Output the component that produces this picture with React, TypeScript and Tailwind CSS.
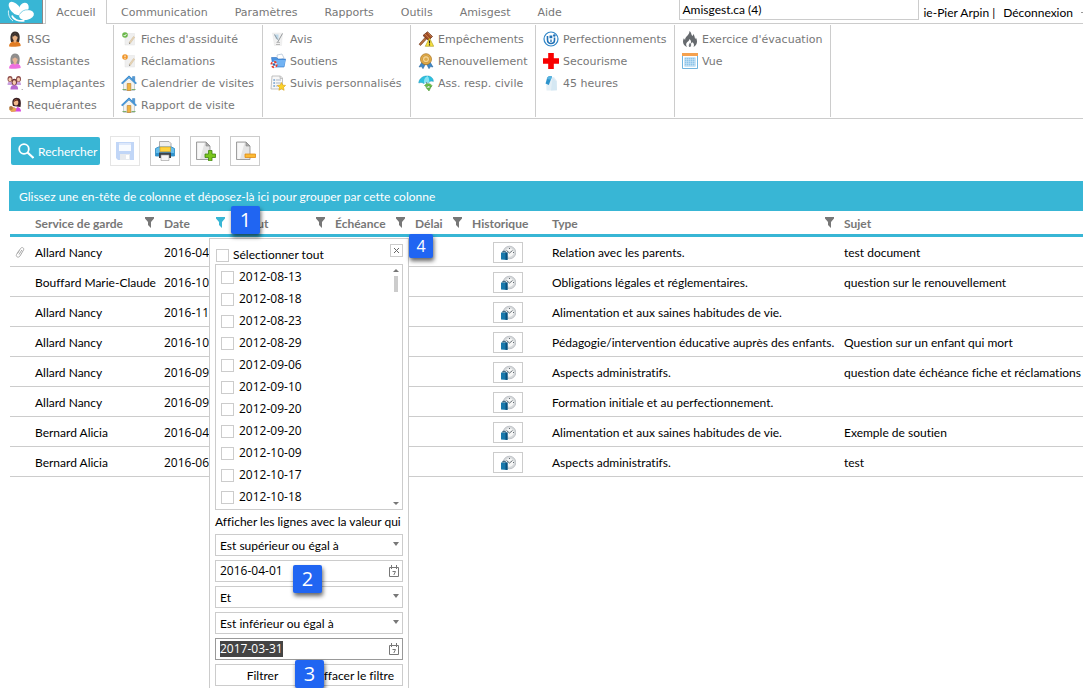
import { ReactNode } from "react";

const TABS = ["Communication", "Paramètres", "Rapports", "Outils", "Amisgest", "Aide"];

function Icon({ children, size = 16 }: { children: ReactNode; size?: number }) {
  return (
    <svg viewBox="0 0 16 16" width={size} height={size} className="shrink-0" aria-hidden="true">
      {children}
    </svg>
  );
}

function Person({ hair, skin, body }: { hair: string; skin: string; body: string }) {
  return (
    <Icon>
      <path d="M4 11C2.600 6 3.600 .5 8 .5S13.600 5 12 11z" fill={hair} />
      <path d="M2 15.500c0-3 2-4.500 4.500-5h3c3 .5 4.200 2 4.200 4.500-2 .8-9 .9-11.700.5z" fill={body} />
      <path d="M6.700 8h2.800v2.500L8 12l-1.500-1.500z" fill={skin} />
      <ellipse cx="8" cy="6" rx="2.600" ry="3.300" fill={skin} />
      <path d="M5 5.500C5.500 3 7 2.500 9 2.800c1.500.4 2 1.500 2 3C9.500 5.500 8.500 5 8 4 7.500 5 6.500 5.500 5 5.500z" fill={hair} />
    </Icon>
  );
}

const replacements = (
  <Icon>
    {[3, 11.5].map((x) => (
      <g key={x}>
        <path d={`M${x - 2.5} 10c0-3 1-3.500 2.500-3.500s2.500.5 2.500 3.500z`} fill="#c9a0dd" />
        <ellipse cx={x} cy="4" rx="2.500" ry="3" fill="#8c4a48" />
        <ellipse cx={x} cy="4.500" rx="1.500" ry="2.100" fill="#f7cdb0" />
      </g>
    ))}
    <path d="M3.500 14.500c0-3.500 1.500-4.500 3.800-4.500s3.800 1 3.800 4.500z" fill="#b569cf" />
    <ellipse cx="7.300" cy="7" rx="2.700" ry="3.300" fill="#6d3436" />
    <ellipse cx="7.300" cy="7.600" rx="1.700" ry="2.300" fill="#f7cdb0" />
    <path d="M14.700 14h1v1h-1z" fill="#999" />
  </Icon>
);

const requester = (
  <Icon>
    <path d="M6 9C4.500 5 5.500 .8 9.500.8S14.500 4 13.500 10z" fill="#3a2024" />
    <path d="M4 14.500c0-3 2-4.500 5-4.500 3.500 0 5 2 5 4.500z" fill="#d648dd" />
    <ellipse cx="9" cy="5.500" rx="2.300" ry="3" fill="#f2b98c" />
    <path d="M6.700 5c0-3 4-3.500 5-1-2-.5-3 0-5 1z" fill="#6b2c1a" />
    <path d="M2 12.500l3.500-2.500 4 1.500-1 3-4 .5z" fill="#e5a650" />
    <circle cx="4" cy="11" r="1.900" fill="#b07840" />
    <path d="M7 10l2 1.500 1.500-1.500z" fill="#fff" />
  </Icon>
);

function Note({ dot, check }: { dot: string; check?: boolean }) {
  return (
    <Icon>
      <path d="M4 2.500h9.500v11.500H4z" fill="#efefef" stroke="#e2e2e2" strokeWidth=".5" />
      <path d="M8 11.500l4.500-6 1.200.8-4.300 6z" fill="#e8d5b5" stroke="#c8b08c" strokeWidth=".4" />
      <path d="M8 11.500v1.400l1.400-.6z" fill="#777" />
      <circle cx="4" cy="4" r="2.800" fill={dot} />
      {check ? (
        <path d="M2.700 4l1 1.100 1.700-2" stroke="#fff" strokeWidth="1" fill="none" />
      ) : (
        <path d="M4 2.500v1.800M4 5v.8" stroke="#fff" strokeWidth="1" />
      )}
    </Icon>
  );
}

const house = (
  <Icon>
    <path d="M11.500 1.500h2.300V6l-2.300-2z" fill="#4f9bd8" stroke="#2d6fb0" strokeWidth=".4" />
    <path d="M2.500 8L8 3l5.500 5v7.500h-11z" fill="#f3f3ef" stroke="#aab4bc" strokeWidth=".6" />
    <path d="M.7 8.600L8 1.800l7.300 6.800" fill="none" stroke="#2f83ca" strokeWidth="1.800" />
    <path d="M1 8.400L8 2l7 6.400" fill="none" stroke="#79bdf0" strokeWidth=".6" />
    <path d="M6.200 8.500h3.600v7H6.200z" fill="#f0b340" stroke="#b87a28" strokeWidth=".6" />
    <path d="M1.500 14.500h4M10.500 14.500h4" stroke="#7eae6c" strokeWidth="1.200" />
  </Icon>
);

const notice = (
  <Icon>
    <path d="M2.500 2h10l-1 12.500h-7z" fill="#f1f1f1" stroke="#e4e4e4" strokeWidth=".4" />
    <path d="M4 3.500h4.500V9L6 8z" fill="#bcd8ea" />
    <path d="M4.500 3.500l3 5M12.500 2.500L7.500 11.500" stroke="#8a8e92" strokeWidth=".9" fill="none" />
    <path d="M6.500 11.500c1-.8 2 .5 3.500 0M6 13.500h4" stroke="#aaa" strokeWidth=".8" fill="none" />
  </Icon>
);

const support = (
  <Icon>
    <path d="M7 2l5-1 2 4-6 3z" fill="#fff" stroke="#9fb6cf" strokeWidth=".6" />
    <path d="M1.500 4.500h5L8 6h7.500L14 14H3z" fill="#4a94e2" stroke="#2d6fbf" strokeWidth=".6" />
    <path d="M4 7h11.500L14 13.500H4z" fill="#72b3f3" />
    <circle cx="4" cy="11.500" r="2.700" fill="#fff" stroke="#e03a2e" strokeWidth="1.900" strokeDasharray="2.200 2" />
    <circle cx="4" cy="11.500" r="1.300" fill="#2d62a8" />
  </Icon>
);

const followUp = (
  <Icon>
    <path d="M2 1h8.500L12.500 3v11H1z" fill="#f8f8f8" stroke="#a9a9a9" strokeWidth=".7" />
    <path d="M10 1v2.500h2.500" fill="#ddd" stroke="#a9a9a9" strokeWidth=".6" />
    <path d="M3.500 5h1.200M3.500 8h1.200M3.500 11h1.200" stroke="#357abf" strokeWidth="1.300" />
    <path d="M5.800 5H11M5.800 8H11M5.800 11H8" stroke="#a9b4c5" />
    <path d="M11.500 7.500l1.200 2.600 2.900.3-2.100 2 .6 2.900-2.600-1.500-2.600 1.500.6-2.900-2.100-2 2.900-.3z" fill="#fbd22c" stroke="#d9a010" strokeWidth=".6" />
  </Icon>
);

const gavel = (
  <Icon>
    <path d="M1 13.200L7.500 6l1.500 1.500-6.500 7z" fill="#b5703f" stroke="#6e3619" strokeWidth=".6" />
    <path d="M5 4.500L9.500.8l5 4.700-4 4z" fill="#a04e25" stroke="#5f2b12" strokeWidth=".7" />
    <path d="M7 3l4.800 5M9.700 1.500l4 4.500" stroke="#d78b58" strokeWidth=".8" />
    <path d="M11.500 7l4.200 8.300H7.300z" fill="#f9e341" stroke="#a59318" strokeWidth=".6" />
    <path d="M11.500 9.500v3M11.500 13.200v1.200" stroke="#222" strokeWidth="1.200" />
  </Icon>
);

const ribbonMedal = (
  <Icon>
    <path d="M4 9l-3 5 2.500-.4L5 15.700 7.500 11zM12 9l3 5-2.500-.4-1.500 2.100L8.500 11z" fill="#3f87c5" stroke="#215d95" strokeWidth=".5" />
    <circle cx="8" cy="6.200" r="5.500" fill="#e3ae48" stroke="#a66f1c" strokeWidth=".7" />
    <circle cx="8" cy="6.200" r="3.600" fill="#f5d590" stroke="#bd8530" strokeWidth=".7" />
    <circle cx="8" cy="6.200" r="1.700" fill="#e0ab4c" />
  </Icon>
);

const insurance = (
  <Icon>
    <path d="M.8 8C1 3.500 5 .8 9.500 1c3.500 0 6 2.500 5.800 5.500C13.500 5.800 12 6 11 7.500 9 6.500 7 7 6 8.500 4.500 7.500 2.500 7.200.8 8z" fill="#2cc0df" stroke="#1494b8" strokeWidth=".5" />
    <path d="M6 8.500C5.500 5 6.500 2.500 9.500 1c1.500 1.500 2 4 1.500 6.500" fill="#86e3f2" />
    <path d="M8.500 7l.8 4.500" stroke="#789" />
    <path d="M6.500 10.500c2-2.500 5.500-2.500 7.500 0l-1.500 1.500c-1.500-1.500-3-1.500-4 0zM8 12.500c2 1 4.500.5 5.500-1.500L11 16z" fill="#6cc04a" stroke="#3f8f2a" strokeWidth=".5" />
  </Icon>
);

const training = (
  <Icon>
    <circle cx="8" cy="8" r="7" fill="#fff" stroke="#2f86c8" strokeWidth="1.200" />
    <path d="M4.500 5v3.500c0 3 1.500 4 3.500 4s3.500-1.500 3.500-3.500V6.500" fill="none" stroke="#1f70b5" strokeWidth="1.600" />
    <path d="M6.500 4.500h2.800v2.700H6.500z" fill="#1f70b5" />
    <circle cx="11.300" cy="4.500" r="1.300" fill="#1f70b5" />
    <path d="M8 8.500v2.500" stroke="#1f70b5" strokeWidth="1.300" />
  </Icon>
);

const firstAid = (
  <Icon>
    <path d="M5.200 0h5.600v5.200H16v5.600h-5.200V16H5.200v-5.200H0V5.200h5.200z" fill="#f80000" />
  </Icon>
);

const hours = (
  <Icon>
    <path d="M3 3.500L11 2l3 4v9.500H3.500z" fill="#e4eff6" />
    <path d="M9.500 2.500L13.500 6.500 14 15l-6 .5z" fill="#d5e8f3" />
    <path d="M4.500 2.200C6 .8 8.500.8 9 1.600L5.800 10 2.500 8.500z" fill="#2e94cc" />
    <path d="M4.500 2.200C6 .8 8.500.8 9 1.600L7.800 4.800 4 4z" fill="#59b4e0" />
  </Icon>
);

const fire = (
  <Icon>
    <path
      d="M7.500 0c2.500 2 1.500 4 3 5 .6-.7.7-1.400.5-2.200 2 2 1.600 4 2.200 5.200.5-.4.700-.8.700-1.500 2.300 4 .9 8-2.400 9.500 1-2 .3-3.800-1-5-.1 1-.7 1.300-1.200 1.300C9 10 8.700 8.800 7.500 8 7.300 10 5.500 10.500 4.500 12c-.6 1.200-.4 2.700.5 4C1 14.500 0 10.500 2 7c.2 1 .6 1.500 1.200 1.700C2.800 5.500 7.500 4.500 7.500 0z"
      fill="#666a6e"
    />
    <path d="M8 11.500c1.300 1.200 1.800 3 .3 4.500h-1C6 14.500 7.200 13 8 11.500z" fill="#777b80" />
  </Icon>
);

const gridView = (
  <Icon>
    <path d="M.5 1h15v14.500H.5z" fill="#fff" stroke="#4ba1d5" strokeWidth=".8" />
    <path d="M0 0h16v3H0z" fill="#f5a14e" />
    <path d="M2.500 4.500h11v9h-11z" fill="#8cc4ea" />
    <path d="M2.500 6.500h11M2.500 8.500h11M2.500 10.500h11M2.500 12.500h11M4.500 4.500v9M6.500 4.500v9M8.500 4.500v9M10.500 4.500v9M12.500 4.500v9" stroke="#d3e9f7" strokeWidth=".5" />
  </Icon>
);

const GROUPS: { width: string; items: [string, ReactNode][] }[] = [
  {
    width: "w-[114px]",
    items: [
      ["RSG", <Person hair="#39302c" skin="#e9b183" body="#e07c24" />],
      ["Assistantes", <Person hair="#8d8d8d" skin="#e6b596" body="#ee6fe0" />],
      ["Remplaçantes", replacements],
      ["Requérantes", requester],
    ],
  },
  {
    width: "w-[149px]",
    items: [
      ["Fiches d'assiduité", <Note dot="#6cb84c" check />],
      ["Réclamations", <Note dot="#f0962a" />],
      ["Calendrier de visites", house],
      ["Rapport de visite", house],
    ],
  },
  {
    width: "w-[148px]",
    items: [
      ["Avis", notice],
      ["Soutiens", support],
      ["Suivis personnalisés", followUp],
    ],
  },
  {
    width: "w-[125px]",
    items: [
      ["Empêchements", gavel],
      ["Renouvellement", ribbonMedal],
      ["Ass. resp. civile", insurance],
    ],
  },
  {
    width: "w-[139px]",
    items: [
      ["Perfectionnements", training],
      ["Secourisme", firstAid],
      ["45 heures", hours],
    ],
  },
  {
    width: "w-[156px]",
    items: [
      ["Exercice d'évacuation", fire],
      ["Vue", gridView],
    ],
  },
];

const ROWS = [
  ["Allard Nancy", "2016-04-01", "Relation avec les parents.", "test document"],
  ["Bouffard Marie-Claude", "2016-10-01", "Obligations légales et réglementaires.", "question sur le renouvellement"],
  ["Allard Nancy", "2016-11-01", "Alimentation et aux saines habitudes de vie.", ""],
  ["Allard Nancy", "2016-10-01", "Pédagogie/intervention éducative auprès des enfants.", "Question sur un enfant qui mort"],
  ["Allard Nancy", "2016-09-01", "Aspects administratifs.", "question date échéance fiche et réclamations"],
  ["Allard Nancy", "2016-09-01", "Formation initiale et au perfectionnement.", ""],
  ["Bernard Alicia", "2016-04-01", "Alimentation et aux saines habitudes de vie.", "Exemple de soutien"],
  ["Bernard Alicia", "2016-06-01", "Aspects administratifs.", "test"],
];

const COLUMNS = [
  { label: "", width: "w-[20px]" },
  { label: "Service de garde", width: "w-[129px]", filter: "text-[#777]" },
  { label: "Date", width: "w-[71px]", filter: "text-[#38b6d5]" },
  { label: "Début", width: "w-[100px]", filter: "text-[#777]" },
  { label: "Échéance", width: "w-[80px]", filter: "text-[#777]" },
  { label: "Délai", width: "w-[57px]", filter: "text-[#777]" },
  { label: "Historique", width: "w-[80px]" },
  { label: "Type", width: "w-[292px]", filter: "text-[#777]" },
  { label: "Sujet", width: "w-auto" },
];

const DATES = [
  "2012-08-13", "2012-08-18", "2012-08-23", "2012-08-29", "2012-09-06", "2012-09-10",
  "2012-09-20", "2012-09-20", "2012-10-09", "2012-10-17", "2012-10-18",
];

// Dates and digits use the narrower figures of Open Sans
const digits = "font-['Open_Sans','Noto_Sans',sans-serif]";

function Logo() {
  return (
    <a href="#" aria-label="Amisgest" className="flex h-6 w-[43px] items-center justify-center border border-t-0 border-l-0 border-[#888] bg-[#38b6d5]">
      <svg viewBox="0 0 28 22" width="28" height="22" aria-hidden="true">
        <ellipse cx="8" cy="7.500" rx="8" ry="4.500" transform="rotate(48 8 7.500)" fill="#fff" />
        <ellipse cx="17" cy="7" rx="4.500" ry="5.500" transform="rotate(25 17 7)" fill="#fff" />
        <ellipse cx="19.500" cy="14" rx="7.500" ry="4.800" transform="rotate(-12 19.500 14)" fill="#fff" />
        <path d="M12.500 13.500c2-3.500 5-5 9-4.700" fill="none" stroke="#38b6d5" strokeWidth=".6" />
        <path d="M5 14.500c1 4 6.500 6 12.500 5.200" fill="none" stroke="#fff" strokeWidth="1.600" />
        <path d="M1.500 9.500c-.5 4.500 1 8 4.500 10.500" fill="none" stroke="#fff" strokeWidth=".8" />
      </svg>
    </a>
  );
}

function Funnel() {
  return (
    <svg viewBox="0 0 9 11" width="9" height="11" aria-hidden="true">
      <path d="M0 0h9v1.500L6 5v6L3 8V5L0 1.500z" fill="currentColor" />
    </svg>
  );
}

function HistoryIcon() {
  return (
    <Icon>
      <circle cx="9.500" cy="7.500" r="6.300" fill="#d9dcde" stroke="#b4b8bc" strokeWidth=".8" />
      <circle cx="9.500" cy="7.500" r="4.700" fill="#f5f5f5" stroke="#c5c9cc" strokeWidth=".6" />
      <path d="M6.500 5.500l3 2.500 3-2.500M9.500 3v1M14 7.500h-1" fill="none" stroke="#555c63" strokeWidth=".9" />
      <path d="M1 7.500h6.500v7.500L1 14.500z" fill="#1878ab" />
      <path d="M5.500 7.500h2V15l-2-.2z" fill="#0c4f7b" />
      <path d="M2.800 7.500V6.300h2.500v1.200" stroke="#2a5874" fill="none" />
    </Icon>
  );
}

const saveIcon = (
  <svg viewBox="0 0 20 20" width="20" height="20" className="opacity-50" aria-hidden="true">
    <path d="M1 1h18v18H3l-2-2z" fill="#85aef0" />
    <path d="M4 2h12v8H4z" fill="#f3f8ff" />
    <path d="M4 2h12v2H4z" fill="#bcd3f8" />
    <path d="M5 13h10v6H5z" fill="#d0d6df" />
    <path d="M11 14h3v4h-3z" fill="#fff" />
  </svg>
);

const printIcon = (
  <svg viewBox="0 0 20 20" width="20" height="20" aria-hidden="true">
    <path d="M4.500.5h9.500l2 2V9H4.500z" fill="#eee" stroke="#999" strokeWidth=".8" />
    <path d="M.5 7.500l3-1.500h13l3 1.500V15H.5z" fill="#65bdec" stroke="#2a86bd" strokeWidth=".8" />
    <path d="M1 12h18v3H1z" fill="#2f94cf" />
    <path d="M5 6h10.500v4.500H5z" fill="#ffd23c" stroke="#d79b16" strokeWidth=".6" />
    <path d="M4 11.500h12V17H4z" fill="#3c4248" />
    <path d="M6 14h8v5.500H6z" fill="#f4f4f4" stroke="#999" strokeWidth=".6" />
  </svg>
);

const sheet = (
  <>
    <path d="M1.500 1h9.500l4 4v13.500H1.500z" fill="#e4e4e4" stroke="#8b8b8b" strokeWidth=".8" />
    <path d="M2.500 2h7L5 18H2.500z" fill="#f8f8f8" />
    <path d="M11 1v4h4z" fill="#aaa" stroke="#888" strokeWidth=".6" />
  </>
);

const addIcon = (
  <svg viewBox="0 0 21 20" width="21" height="20" aria-hidden="true">
    {sheet}
    <path d="M13.500 9.500h3.500V13h3.500v3.500H17v3.300h-3.500v-3.300H10V13h3.500z" fill="#7ac61e" stroke="#3f8310" strokeWidth=".8" />
  </svg>
);

const removeIcon = (
  <svg viewBox="0 0 21 20" width="21" height="20" aria-hidden="true">
    {sheet}
    <path d="M10 13h10.500v3.500H10z" fill="#fbba35" stroke="#e08a15" strokeWidth=".8" />
  </svg>
);

const TOOLS: [string, ReactNode][] = [
  ["Enregistrer", saveIcon],
  ["Imprimer", printIcon],
  ["Ajouter", addIcon],
  ["Supprimer", removeIcon],
];

function FilterSelect({ label, value }: { label: string; value: string }) {
  return (
    <div className="relative">
      <select aria-label={label} className="block h-[22px] w-full appearance-none border border-[#ccc] bg-white px-1 pt-px">
        <option>{value}</option>
      </select>
      <svg viewBox="0 0 6 4" width="6" height="4" className="pointer-events-none absolute top-2 right-1" aria-hidden="true">
        <path d="M0 0h6L3 4z" fill="#777" />
      </svg>
    </div>
  );
}

function DateField({ label, value, selected = false }: { label: string; value: string; selected?: boolean }) {
  return (
    <div className={`flex h-[22px] items-center justify-between border pr-[3px] pl-1 ${selected ? "border-[#999]" : "border-[#ccc]"}`}>
      <input
        type="text"
        aria-label={label}
        defaultValue={value}
        className={`field-sizing-content h-4 outline-none ${digits} ${selected ? "bg-[#444] text-white" : ""}`}
      />
      <svg viewBox="0 0 10 12" width="10" height="12" aria-hidden="true">
        <path d="M.5 2.500h9v9h-9z" fill="none" stroke="#777" />
        <path d="M2.500 0v4M7.500 0v4M4 2.500h2M3.500 6.500h3L4.800 10" fill="none" stroke="#777" />
      </svg>
    </div>
  );
}

const checkbox = "size-[13px] shrink-0 appearance-none border border-[#ccc] bg-white";

function FilterPopup() {
  return (
    <div className="absolute top-[57px] left-[200px] flex w-[200px] flex-col gap-1 border border-[#ccc] bg-white px-[5px] pt-[5px] pb-2">
      <div>
        <div className="flex h-5 items-start justify-between">
          <label className="flex h-[22px] items-center gap-1 pl-px">
            <input type="checkbox" className={checkbox} />
            Sélectionner tout
          </label>
          <button type="button" aria-label="Fermer" className="flex size-[13px] items-center justify-center border border-[#ccc]">
            <svg viewBox="0 0 5 5" width="5" height="5" aria-hidden="true">
              <path d="M0 0l5 5M5 0L0 5" stroke="#666" />
            </svg>
          </button>
        </div>
        <div className="flex justify-between border border-[#ccc] pl-[5px]">
          <ul className="py-px">
            {DATES.map((d, i) => (
              <li key={i}>
                <label className={`flex h-[22px] items-center gap-[5px] ${digits}`}>
                  <input type="checkbox" className={checkbox} />
                  {d}
                </label>
              </li>
            ))}
          </ul>
          <div className="flex w-3 flex-col items-center gap-1 py-1">
            <svg viewBox="0 0 6 3" width="6" height="3" aria-hidden="true">
              <path d="M3 0l3 3H0z" fill="#777" />
            </svg>
            <div className="h-4 w-1 bg-[#ccc]" />
            <svg viewBox="0 0 6 3" width="6" height="3" className="mt-auto" aria-hidden="true">
              <path d="M0 0h6L3 3z" fill="#777" />
            </svg>
          </div>
        </div>
      </div>
      <p className="h-4 leading-4 whitespace-nowrap">Afficher les lignes avec la valeur qui</p>
      <FilterSelect label="Premier critère" value="Est supérieur ou égal à" />
      <DateField label="Première date" value="2016-04-01" />
      <FilterSelect label="Opérateur" value="Et" />
      <FilterSelect label="Second critère" value="Est inférieur ou égal à" />
      <DateField label="Seconde date" value="2017-03-31" selected />
      <div className="flex">
        <button type="button" className="h-[22px] flex-1 border border-r-0 border-[#ccc] pt-px">Filtrer</button>
        <button type="button" className="h-[22px] flex-1 border border-l-0 border-[#ccc] pt-px whitespace-nowrap">Effacer le filtre</button>
      </div>
    </div>
  );
}

function Badge({ n, className }: { n: number; className: string }) {
  return (
    <span className={`absolute flex items-center justify-center rounded-xs bg-[#2065f2] text-white shadow-[1px_3px_4px_rgba(0,0,0,0.6)] ${digits} ${className}`}>
      {n}
    </span>
  );
}

export default function App() {
  return (
    <div className="h-screen overflow-hidden bg-white font-['Lato','Open_Sans',sans-serif] text-xs text-black [font-variant-ligatures:none]">
      <header>
        <div className="flex h-6 border-b border-[#ccc] text-[#777]">
          <Logo />
          <nav className="ml-[2px] flex font-['DejaVu_Sans',sans-serif] text-[11px]">
            <a href="#" className="h-6 w-[62px] border-x border-[#ccc] bg-white pt-px text-center leading-6">Accueil</a>
            <div className="flex gap-[27px] pt-px pl-[14px]">
              {TABS.map((t) => (
                <a key={t} href="#" className="leading-6">{t}</a>
              ))}
            </div>
          </nav>
          <div className="ml-auto flex text-black">
            <div className="h-5 w-[240px] border border-t-0 border-[#ccc] pl-[2px] leading-5 whitespace-nowrap">Amisgest.ca (4)</div>
            <div className="flex items-center gap-2 pt-[2px] pl-1 leading-5 whitespace-nowrap">
              <span>ie-Pier Arpin |</span>
              <a href="#">Déconnexion</a>
              <span className="h-px w-[2px] bg-[#999]" />
            </div>
          </div>
        </div>
        <div className="flex h-[95px] border-b border-[#ccc] py-px font-['DejaVu_Sans',sans-serif] text-[11px] text-[#777]">
          {GROUPS.map((g) => (
            <ul key={g.width} className={`shrink-0 border-r border-[#ccc] pt-[3px] pl-[7px] ${g.width}`}>
              {g.items.map(([label, icon]) => (
                <li key={label}>
                  <a href="#" className="flex h-[22px] items-center gap-1 whitespace-nowrap">
                    {icon}
                    <span className="pt-[2px]">{label}</span>
                  </a>
                </li>
              ))}
            </ul>
          ))}
        </div>
      </header>

      <main className="pt-[17px] pl-[9px]">
        <div className="flex items-center gap-[10px] pl-[2px]">
          <button type="button" className="flex h-[28px] w-[89px] items-center gap-1 rounded-xs bg-[#38b6d5] pl-[7px] whitespace-nowrap text-white">
            <svg viewBox="0 0 16 16" width="16" height="16" className="shrink-0" aria-hidden="true">
              <circle cx="6" cy="6" r="4.800" fill="none" stroke="#fff" strokeWidth="1.800" />
              <path d="M9.500 9.500l6 5.500" stroke="#fff" strokeWidth="2.200" />
            </svg>
            <span className="pt-[2px]">Rechercher</span>
          </button>
          {TOOLS.map(([label, icon], i) => (
            <button
              key={label}
              type="button"
              aria-label={label}
              disabled={i === 0}
              className="flex size-[30px] items-center justify-center border border-[#ccc] disabled:border-[#e5e5e5]"
            >
              {icon}
            </button>
          ))}
        </div>

        <section className="relative mt-[15px]">
          <div className="h-[30px] bg-[#38b6d5] pl-[10px] leading-8 text-white">
            Glissez une en-tête de colonne et déposez-là ici pour grouper par cette colonne
          </div>
          <div className="pl-px">
            <table className="w-full table-fixed border-separate border-spacing-0">
              <thead>
                <tr className="h-[26px] text-left text-[#777]">
                  {COLUMNS.map((c, i) => (
                    <th key={i} className={`border-b-3 border-[#38b6d5] p-0 pl-[5px] font-bold whitespace-nowrap ${c.width}`}>
                      <div className="flex items-center justify-between pr-[5px]">
                        <span className="pt-[2px]">{c.label}</span>
                        {c.filter && (
                          <button type="button" aria-label={`Filtrer ${c.label}`} className={c.filter}>
                            <Funnel />
                          </button>
                        )}
                      </div>
                    </th>
                  ))}
                </tr>
              </thead>
              <tbody className="[&_td]:border-b [&_td]:border-[#ccc]">
                {ROWS.map(([name, date, type, subject], i) => (
                  <tr key={i} className="h-[30px] whitespace-nowrap">
                    <td className="p-0 pl-[5px]">
                      {i === 0 && (
                        <svg viewBox="0 0 10 12" width="10" height="12" aria-label="Pièce jointe">
                          <path d="M2.500 7.500L5.500 2.500c1.500-2 4-.5 3 1.500L5 10c-1.500 2.300-4.500.8-3.500-1.500L4 4.500M4 8.500l2.800-4.500" fill="none" stroke="#aaa" />
                        </svg>
                      )}
                    </td>
                    <td className="p-0 pt-[2px] pl-[5px]">{name}</td>
                    <td className={`overflow-hidden p-0 pt-[2px] pl-[5px] ${digits}`}>{date}</td>
                    <td />
                    <td />
                    <td />
                    <td className="p-0 pt-[2px] pl-[2px]">
                      <button type="button" aria-label="Historique" className="mx-auto flex h-[21px] w-[30px] items-center justify-center border border-[#ccc]">
                        <HistoryIcon />
                      </button>
                    </td>
                    <td className="p-0 pt-[2px] pl-[5px]">{type}</td>
                    <td className="overflow-hidden p-0 pt-[2px] pl-[5px]">{subject}</td>
                  </tr>
                ))}
              </tbody>
            </table>
          </div>
          <FilterPopup />
          <Badge n={1} className="top-[25px] left-[222px] h-7 w-[29px] text-xl" />
          <Badge n={2} className="top-[384px] left-[284px] h-7 w-[29px] text-xl" />
          <Badge n={3} className="top-[479px] left-[286px] h-7 w-[29px] text-xl" />
          <Badge n={4} className="top-[53px] left-[400px] size-6 text-base" />
        </section>
      </main>
    </div>
  );
}
